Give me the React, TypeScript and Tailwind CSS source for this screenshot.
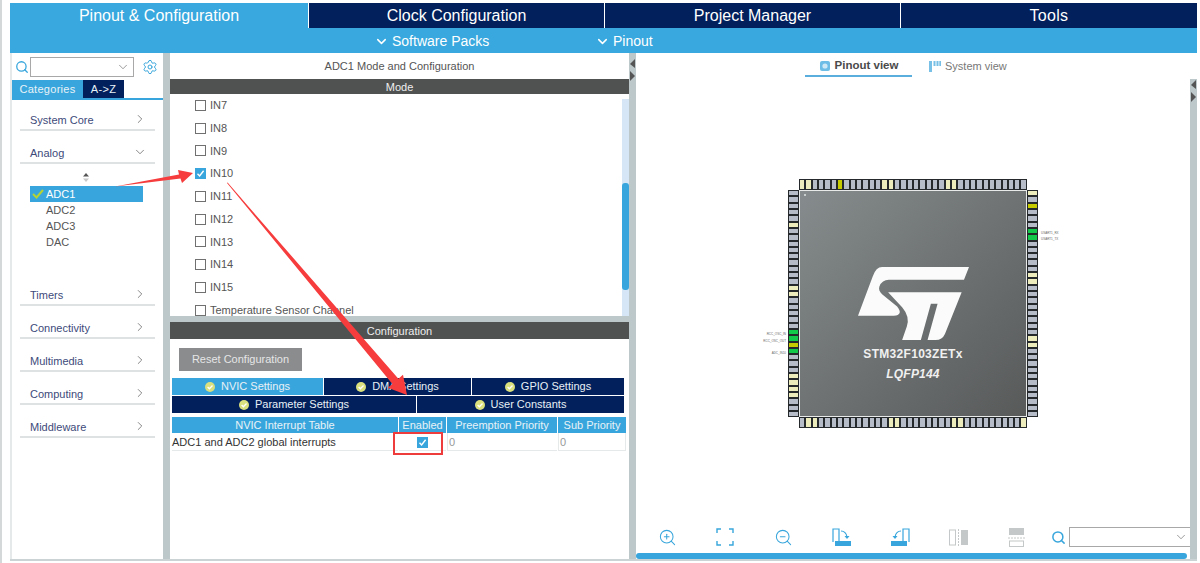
import React from 'react';
import { ChevronDown, ChevronRight, Search, Settings, ZoomIn, ZoomOut } from 'lucide-react';

const pinClass: Record<string, string> = {
  n: 'bg-[#b6bcc8]',
  p: 'bg-[#ecECbc]',
  o: 'bg-[#c6cb00]',
  g: 'bg-[#12c94a]',
};

function pinList(marks: Record<number, string>) {
  return Array.from({ length: 36 }, (_, i) => marks[i] ?? 'n');
}

const topPins = pinList({ 0: 'p', 1: 'p', 6: 'o', 13: 'p', 14: 'p', 23: 'p', 24: 'p' });
const bottomPins = pinList({ 1: 'p', 2: 'p', 14: 'p', 15: 'p', 24: 'p', 25: 'p', 35: 'p' });
const leftPins = pinList({ 5: 'p', 15: 'p', 16: 'p', 22: 'g', 23: 'g', 24: 'o', 25: 'g', 29: 'p', 30: 'p', 31: 'p', 32: 'p' });
const rightPins = pinList({ 0: 'p', 2: 'o', 6: 'g', 7: 'g', 13: 'p', 14: 'p', 23: 'p', 24: 'p' });

function HPins({ pins }: { pins: string[] }) {
  return (
    <div className="flex h-[11px] w-[228px] bg-[#26292c]">
      {pins.map((p, i) => (
        <div key={i} className="flex-1 px-[1px] py-[1px]">
          <div className={`h-full w-full ${pinClass[p]}`} />
        </div>
      ))}
    </div>
  );
}

function VPins({ pins }: { pins: string[] }) {
  return (
    <div className="flex h-full w-[11px] flex-col bg-[#26292c]">
      {pins.map((p, i) => (
        <div key={i} className="flex-1 px-[1px] py-[1px]">
          <div className={`h-full w-full ${pinClass[p]}`} />
        </div>
      ))}
    </div>
  );
}

function Chip() {
  return (
    <div className="relative flex flex-col items-center">
      <HPins pins={topPins} />
      <div className="flex h-[227px]">
        <VPins pins={leftPins} />
        <div className="relative flex w-[228px] flex-col items-center border border-[#e8eaea] bg-gradient-to-br from-[#868c8d] to-[#585a5a] pt-[76px]">
          <div className="absolute left-[4px] top-[3px] h-[2px] w-[2px] bg-[#c8cccc]" />
          <svg width="111" height="73" viewBox="28 22 332 218" fill="#fbfbfb">
            <path d="M100,22 L360,22 L345,60 L120,60 Q100,60 92,80 Q88,92 100,103 L145,140 Q165,165 135,168 L28,168 L72,50 Q82,22 100,22 Z" />
            <path d="M118,97 L338,97 L288,222 Q280,240 260,240 L236,240 L266,132 L246,132 L216,240 L160,240 L174,200 Q184,170 160,142 Z" />
          </svg>
          <div className="mt-[7px] text-[12px] font-bold leading-[14px] tracking-[0.3px] text-[#f0f0f0]">STM32F103ZETx</div>
          <div className="mt-[6px] text-[12px] font-bold italic leading-[14px] tracking-[0.2px] text-[#f0f0f0]">LQFP144</div>
        </div>
        <VPins pins={rightPins} />
      </div>
      <HPins pins={bottomPins} />
      <span className="absolute right-[252px] top-[153px] whitespace-nowrap text-[3px] leading-[4px] text-[#666]">RCC_OSC_IN</span>
      <span className="absolute right-[252px] top-[160px] whitespace-nowrap text-[3px] leading-[4px] text-[#666]">RCC_OSC_OUT</span>
      <span className="absolute right-[252px] top-[172px] whitespace-nowrap text-[3px] leading-[4px] text-[#666]">ADC_IN10</span>
      <span className="absolute left-[253px] top-[52px] whitespace-nowrap text-[3px] leading-[4px] text-[#666]">USART1_RX</span>
      <span className="absolute left-[253px] top-[58px] whitespace-nowrap text-[3px] leading-[4px] text-[#666]">USART1_TX</span>
    </div>
  );
}

function CheckBox({ checked }: { checked?: boolean }) {
  if (checked) {
    return (
      <svg width="11" height="11" viewBox="0 0 11 11" className="shrink-0">
        <rect width="11" height="11" fill="#38a6dc" />
        <path d="M2.5 5.8 L4.6 8 L8.6 2.8" fill="none" stroke="#fff" strokeWidth="1.4" />
      </svg>
    );
  }
  return <div className="h-[11px] w-[11px] shrink-0 border border-[#707070] bg-white" />;
}

function ModeRow({ label, checked }: { label: string; checked?: boolean }) {
  return (
    <div className="flex h-[22.75px] shrink-0 items-center gap-[4px] pl-[25px] text-[11px] text-[#555]">
      <CheckBox checked={checked} />
      <span className="whitespace-nowrap">{label}</span>
    </div>
  );
}

function Category({ label, open, first }: { label: string; open?: boolean; first?: boolean }) {
  return (
    <div className={`mx-[8px] flex shrink-0 items-end justify-between border-b-2 border-[#dfe2e3] pb-[1px] pl-[10px] pr-[8px] text-[11px] text-[#3d4a7a] ${first ? 'h-[31px]' : 'h-[33px]'}`}>
      <span>{label}</span>
      {open ? (
        <ChevronDown size={14} strokeWidth={1.2} className="mb-[2px] text-[#555]" />
      ) : (
        <ChevronRight size={14} strokeWidth={1.2} className="mb-[2px] text-[#555]" />
      )}
    </div>
  );
}

function OkDot() {
  return (
    <svg width="10" height="10" viewBox="0 0 10 10" className="shrink-0">
      <circle cx="5" cy="5" r="5" fill="#dbe07e" />
      <path d="M2.6 5 L4.4 6.8 L7.5 3.5" fill="none" stroke="#fff" strokeWidth="1.3" />
    </svg>
  );
}

function SetTab({ label, active, w }: { label: string; active?: boolean; w: string }) {
  return (
    <div className={`flex h-full items-center justify-center gap-[6px] text-[11px] text-[#e8f0f6] ${w} ${active ? 'bg-[#38a6dc]' : 'bg-[#01205c]'}`}>
      <OkDot />
      <span>{label}</span>
    </div>
  );
}

function Handles() {
  return (
    <svg width="7" height="24" viewBox="0 0 7 24">
      <path d="M6 1 L1 6 L6 10 Z" fill="#555" />
      <path d="M1 13 L6 18 L1 23 Z" fill="#555" />
    </svg>
  );
}

function ToolIcon({ children }: { children: React.ReactNode }) {
  return <div className="flex w-[58.3px] shrink-0 items-center justify-center">{children}</div>;
}

export default function App() {
  return (
    <div className="relative flex h-[563px] w-[1200px] flex-col overflow-hidden bg-white pb-[2px] pl-[10px] pr-[3px] pt-[3px] [font-family:'Liberation_Sans',sans-serif]">
      <div className="absolute bottom-0 left-0 top-0 w-[2px] bg-[#d5d8d8]" />
      {/* header tabs */}
      <div className="flex h-[25px] shrink-0 text-[16px] text-white">
        <div className="flex w-[298px] items-center justify-center bg-[#38a8de]">Pinout &amp; Configuration</div>
        <div className="ml-px flex w-[295px] items-center justify-center bg-[#01205c]">Clock Configuration</div>
        <div className="ml-px flex w-[295px] items-center justify-center bg-[#01205c]">Project Manager</div>
        <div className="ml-px flex flex-1 items-center justify-center bg-[#01205c] tracking-[0.3px]">Tools</div>
      </div>
      <div className="flex h-[25px] shrink-0 items-center bg-[#38a8de] pl-[364px] pt-[2px] text-[14px] text-white">
        <ChevronDown size={15} strokeWidth={2.4} />
        <span className="ml-[3px] w-[203px]">Software Packs</span>
        <ChevronDown size={15} strokeWidth={2.4} />
        <span className="ml-[3px]">Pinout</span>
      </div>

      {/* main */}
      <div className="flex min-h-0 flex-1 border-b-2 border-[#ccd3d4]">
        {/* left */}
        <div className="flex w-[153px] shrink-0 flex-col border-l-2 border-[#e6e9ea]">
          <div className="flex h-[27px] shrink-0 items-center pl-[3px]">
            <Search size={14} strokeWidth={2.2} className="text-[#38a6dc]" />
            <div className="ml-[1px] flex h-[20px] w-[104px] items-center justify-end border border-[#a8a8a8] pr-[3px]">
              <ChevronDown size={14} strokeWidth={1} className="text-[#555]" />
            </div>
            <Settings size={16} strokeWidth={1.5} className="ml-[8px] text-[#38a6dc]" />
          </div>
          <div className="flex h-[20px] shrink-0 border-b-2 border-[#38a6dc] text-[11px] tracking-[0.3px] text-[#e8f2f8]">
            <div className="flex w-[71px] items-center justify-center bg-[#38a6dc] pt-px">Categories</div>
            <div className="flex w-[41px] items-center justify-center bg-[#01205c] pt-px">A-&gt;Z</div>
          </div>
          <Category label="System Core" first />
          <Category label="Analog" open />
          <div className="flex h-[109px] shrink-0 flex-col pl-[18px]">
            <svg width="8" height="10" viewBox="0 0 8 10" className="ml-[52px] mt-[9px]">
              <path d="M4 0 L7 3.5 L1 3.5 Z" fill="#555" />
              <path d="M4 9 L7 5.5 L1 5.5 Z" fill="#c8c8c8" />
            </svg>
            <div className="mt-[3px] flex h-[16px] w-[113px] items-center bg-[#38a6dc] text-[11px] text-white">
              <svg width="12" height="10" viewBox="0 0 12 10" className="ml-[2px]">
                <path d="M1 5 L4.5 8.5 L11 1" fill="none" stroke="#b5d334" strokeWidth="2" />
              </svg>
              <span className="ml-[2px]">ADC1</span>
            </div>
            <div className="pl-[16px] text-[11px] leading-[16px] text-[#555]">
              <div>ADC2</div>
              <div>ADC3</div>
              <div>DAC</div>
            </div>
          </div>
          <Category label="Timers" />
          <Category label="Connectivity" />
          <Category label="Multimedia" />
          <Category label="Computing" />
          <Category label="Middleware" />
        </div>

        {/* splitter */}
        <div className="w-[7px] shrink-0 bg-[#bcc8ca]" />

        {/* middle */}
        <div className="flex w-[459px] shrink-0 flex-col">
          <div className="flex h-[26px] shrink-0 items-center justify-center pt-px text-[11px] text-[#555]">ADC1 Mode and Configuration</div>
          <div className="flex h-[15px] shrink-0 items-center justify-center bg-[#505252] pt-px text-[11px] text-[#eee]">Mode</div>
          <div className="flex h-[222px] shrink-0">
            <div className="flex min-w-0 flex-1 flex-col overflow-hidden">
              <ModeRow label="IN7" />
              <ModeRow label="IN8" />
              <ModeRow label="IN9" />
              <ModeRow label="IN10" checked />
              <ModeRow label="IN11" />
              <ModeRow label="IN12" />
              <ModeRow label="IN13" />
              <ModeRow label="IN14" />
              <ModeRow label="IN15" />
              <ModeRow label="Temperature Sensor Channel" />
            </div>
            <div className="mt-[5px] w-[7px] shrink-0 bg-[#d6e6f6] pt-[84px]">
              <div className="h-[107px] rounded-[3px] bg-[#38a6dc]" />
            </div>
          </div>
          <div className="h-[6px] shrink-0 bg-[#bcc8ca]" />
          <div className="flex h-[17px] shrink-0 items-center justify-center bg-[#505252] pt-px text-[11px] text-[#eee]">Configuration</div>
          <div className="flex flex-1 flex-col pl-[2px]">
            <div className="ml-[7px] mt-[9px] flex h-[23px] w-[123px] items-center justify-center bg-[#8a8c8e] text-[11px] text-[#e6e6e6]">Reset Configuration</div>
            <div className="mt-[7px] flex h-[17px] w-[452px] gap-px">
              <SetTab label="NVIC Settings" active w="w-[151px]" />
              <SetTab label="DMA Settings" w="w-[147px]" />
              <SetTab label="GPIO Settings" w="flex-1" />
            </div>
            <div className="mt-px flex h-[17px] w-[452px] gap-px">
              <SetTab label="Parameter Settings" w="w-[244px]" />
              <SetTab label="User Constants" w="flex-1" />
            </div>
            <div className="mt-[4px] grid w-[454px] grid-cols-[226px_47px_110px_68px] gap-x-px text-[11px]">
              <div className="flex h-[16px] items-center justify-center bg-[#38a6dc] pt-px text-[#e8f2f8]">NVIC Interrupt Table</div>
              <div className="flex h-[16px] items-center justify-center bg-[#38a6dc] pt-px text-[#e8f2f8]">Enabled</div>
              <div className="flex h-[16px] items-center justify-center bg-[#38a6dc] pt-px text-[#e8f2f8]">Preemption Priority</div>
              <div className="flex h-[16px] items-center justify-center bg-[#38a6dc] pt-px text-[#e8f2f8]">Sub Priority</div>
              <div className="flex h-[18px] items-center border-b border-[#e6e9ea] pt-px text-[#333]">ADC1 and ADC2 global interrupts</div>
              <div className="flex h-[18px] items-center justify-center border-b border-[#e6e9ea] pt-px"><CheckBox checked /></div>
              <div className="flex h-[18px] items-center border-b border-l border-[#e6e9ea] pl-[1px] pt-px text-[#999]">0</div>
              <div className="flex h-[18px] items-center border-b border-l border-r border-[#e6e9ea] pl-[1px] pt-px text-[#999]">0</div>
            </div>
          </div>
        </div>

        {/* splitter */}
        <div className="w-[7px] shrink-0 bg-[#bcc8ca] pt-[5px]"><Handles /></div>

        {/* right */}
        <div className="flex min-w-0 flex-1 flex-col">
          <div className="flex h-[24px] shrink-0 items-end pl-[169px]">
            <div className="flex h-[22px] w-[107px] items-center justify-center gap-[4px] border-b-[2px] border-[#5aaede] pt-[2px] text-[11.5px] font-bold text-[#4a4a4a]">
              <svg width="12" height="12" viewBox="0 0 12 12">
                <rect x="1" y="1" width="10" height="10" rx="2" fill="#6dbde6" />
                <circle cx="6" cy="6" r="2.6" fill="#cfe8f6" />
              </svg>
              <span>Pinout view</span>
            </div>
            <div className="ml-[17px] flex h-[22px] items-center gap-[4px] pt-[1px] text-[11px] text-[#777]">
              <svg width="12" height="12" viewBox="0 0 12 12" fill="#79c0e6">
                <rect x="0" y="0" width="3" height="11" />
                <rect x="4.5" y="0" width="2" height="5" />
                <rect x="7.5" y="0" width="2" height="5" />
                <rect x="10.3" y="0" width="1.7" height="5" />
              </svg>
              <span>System view</span>
            </div>
          </div>
          <div className="flex min-h-0 flex-1 justify-center pt-[102px]">
            <Chip />
          </div>
          <div className="flex h-[20px] shrink-0 items-center pl-[2px]">
            <ToolIcon>
              <ZoomIn size={19} strokeWidth={1.3} className="text-[#38a6dc]" />
            </ToolIcon>
            <ToolIcon>
              <svg width="18" height="18" viewBox="0 0 18 18" fill="none" stroke="#38a6dc" strokeWidth="1.4">
                <path d="M1 5 V1 H5 M13 1 H17 V5 M17 13 V17 H13 M5 17 H1 V13" />
              </svg>
            </ToolIcon>
            <ToolIcon>
              <ZoomOut size={19} strokeWidth={1.3} className="text-[#38a6dc]" />
            </ToolIcon>
            <ToolIcon>
              <svg width="20" height="19" viewBox="0 0 20 19">
                <path d="M1 14 V1 H7 V13" fill="none" stroke="#38a6dc" strokeWidth="1.2" />
                <rect x="3" y="13" width="16" height="5" fill="#38a6dc" />
                <path d="M9 3 Q14 3 15 9" fill="none" stroke="#38a6dc" strokeWidth="1.2" />
                <path d="M12.5 8 L17.5 8 L15 11 Z" fill="#38a6dc" />
              </svg>
            </ToolIcon>
            <ToolIcon>
              <svg width="20" height="19" viewBox="0 0 20 19">
                <path d="M19 14 V1 H13 V13" fill="none" stroke="#38a6dc" strokeWidth="1.2" />
                <rect x="1" y="13" width="16" height="5" fill="#38a6dc" />
                <path d="M11 3 Q6 3 5 9" fill="none" stroke="#38a6dc" strokeWidth="1.2" />
                <path d="M2.5 8 L7.5 8 L5 11 Z" fill="#38a6dc" />
              </svg>
            </ToolIcon>
            <ToolIcon>
              <svg width="19" height="17" viewBox="0 0 19 17">
                <rect x="0.5" y="1" width="6" height="15" fill="none" stroke="#c4c8c8" />
                <path d="M9.5 0 V17" stroke="#c4c8c8" strokeDasharray="2 1" />
                <rect x="12" y="1" width="7" height="15" fill="#c4c8c8" />
              </svg>
            </ToolIcon>
            <ToolIcon>
              <svg width="17" height="19" viewBox="0 0 17 19">
                <rect x="1" y="0" width="15" height="7" fill="#c4c8c8" />
                <path d="M0 10 H17" stroke="#c4c8c8" strokeDasharray="2 1" />
                <rect x="1.5" y="13" width="14" height="5.5" fill="none" stroke="#c4c8c8" />
              </svg>
            </ToolIcon>
            <Search size={15} strokeWidth={2.4} className="ml-[5px] shrink-0 text-[#38a6dc]" />
            <div className="ml-[3px] flex h-[20px] flex-1 items-center justify-end border border-r-0 border-[#a8a8a8] pr-[2px]">
              <ChevronDown size={14} strokeWidth={1} className="text-[#555]" />
            </div>
          </div>
          <div className="mt-[6px] h-[6px] w-[551px] shrink-0 rounded-[3px] bg-[#38a6dc]" />
        </div>

        {/* right splitter */}
        <div className="mt-[26px] w-[7px] shrink-0 bg-[#bcc8ca]"><Handles /></div>
      </div>

      {/* annotations */}
      <svg className="pointer-events-none absolute left-0 top-0" width="1200" height="563" viewBox="0 0 1200 563">
        <path d="M115 186.5 L179 174.5 L178 170 L193 173 L182 183 L180.5 178.5 Z" fill="#f63c3c" />
        <path d="M227 183 L227.6 182.6 L398.4 378.7 L403 374.8 L407 395 L387.8 387.8 L392.4 383.9 Z" fill="#f63c3c" />
        <rect x="394" y="433" width="48" height="21" fill="none" stroke="#ee3b3b" strokeWidth="2" />
      </svg>
    </div>
  );
}
